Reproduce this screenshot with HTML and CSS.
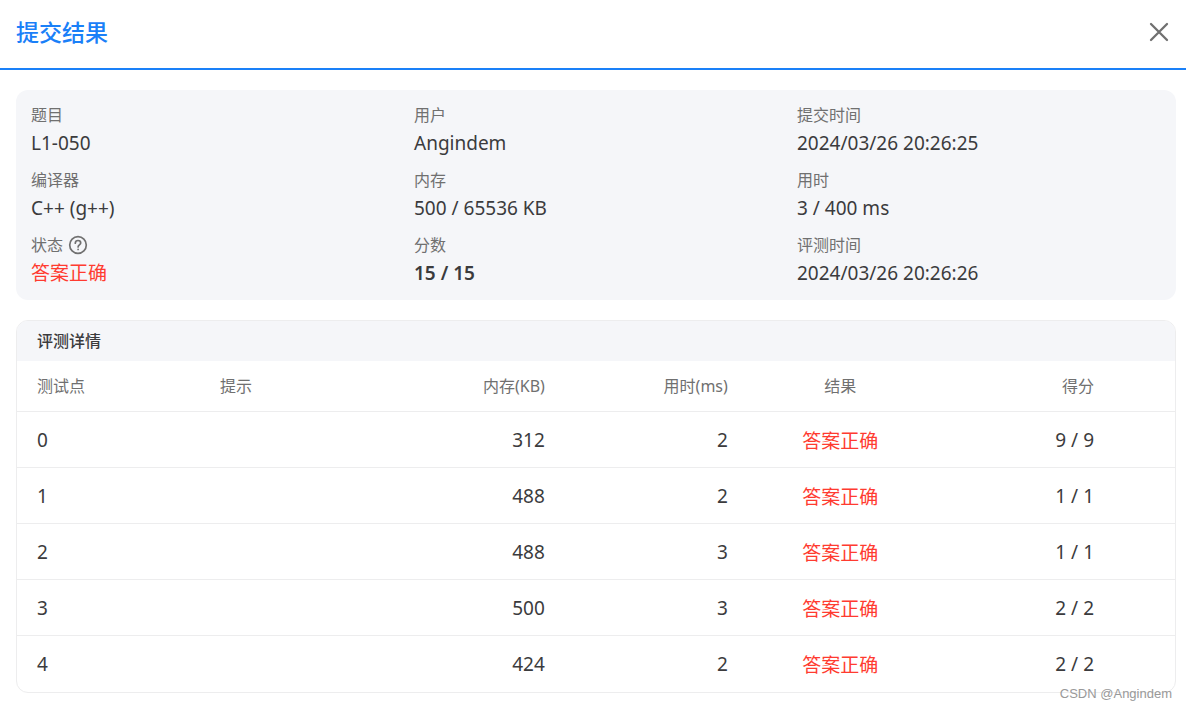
FILE: index.html
```html
<!DOCTYPE html>
<html lang="zh-CN">
<head>
<meta charset="utf-8">
<title>提交结果</title>
<link rel="stylesheet" href="styles.css">
</head>
<body>
<main class="dialog">
  <header class="dialog-header">
    <h1 class="dialog-title">提交结果</h1>
    <button class="close" type="button" aria-label="关闭">
      <svg class="close-icon" viewBox="0 0 20 20" aria-hidden="true"><path d="M2 2 18 18M18 2 2 18"/></svg>
    </button>
  </header>
  <div class="dialog-body">
    <dl class="summary">
      <div class="item"><dt class="label">题目</dt><dd class="value">L1-050</dd></div>
      <div class="item"><dt class="label">用户</dt><dd class="value">Angindem</dd></div>
      <div class="item"><dt class="label">提交时间</dt><dd class="value">2024/03/26 20:26:25</dd></div>
      <div class="item"><dt class="label">编译器</dt><dd class="value">C++ (g++)</dd></div>
      <div class="item"><dt class="label">内存</dt><dd class="value">500 / 65536 KB</dd></div>
      <div class="item"><dt class="label">用时</dt><dd class="value">3 / 400 ms</dd></div>
      <div class="item">
        <dt class="label">状态
          <button class="help" type="button" aria-label="状态说明">
            <svg class="help-icon" viewBox="0 0 20 20" aria-hidden="true"><circle cx="10" cy="10" r="8.3"/><path d="M7.3 8.2C7.3 6.5 8.4 5.5 10 5.5s2.7 1 2.7 2.4c0 1.9-2.6 2-2.6 4"/><path d="M10.1 14.3v.2"/></svg>
          </button>
        </dt>
        <dd class="value accepted">答案正确</dd>
      </div>
      <div class="item"><dt class="label">分数</dt><dd class="value score">15 / 15</dd></div>
      <div class="item"><dt class="label">评测时间</dt><dd class="value">2024/03/26 20:26:26</dd></div>
    </dl>
    <section class="details">
      <h2 class="details-title">评测详情</h2>
      <table class="cases">
        <colgroup><col class="col"><col class="col"><col class="col"><col class="col"><col class="col"><col class="col-last"></colgroup>
        <thead>
          <tr><th>测试点</th><th>提示</th><th class="num">内存(KB)</th><th class="num">用时(ms)</th><th class="mid">结果</th><th class="num points">得分</th></tr>
        </thead>
        <tbody>
          <tr><td>0</td><td></td><td class="num">312</td><td class="num">2</td><td class="mid accepted">答案正确</td><td class="num points">9 / 9</td></tr>
          <tr><td>1</td><td></td><td class="num">488</td><td class="num">2</td><td class="mid accepted">答案正确</td><td class="num points">1 / 1</td></tr>
          <tr><td>2</td><td></td><td class="num">488</td><td class="num">3</td><td class="mid accepted">答案正确</td><td class="num points">1 / 1</td></tr>
          <tr><td>3</td><td></td><td class="num">500</td><td class="num">3</td><td class="mid accepted">答案正确</td><td class="num points">2 / 2</td></tr>
          <tr><td>4</td><td></td><td class="num">424</td><td class="num">2</td><td class="mid accepted">答案正确</td><td class="num points">2 / 2</td></tr>
        </tbody>
      </table>
      <span class="watermark">CSDN @Angindem</span>
    </section>
  </div>
</main>
</body>
</html>
```
FILE: styles.css
```css
* {
  box-sizing: border-box;
}

body {
  margin: 0;
  background: #fff;
  color: #3b3b3d;
  font-family: "Noto Sans", "Noto Sans CJK SC", sans-serif;
  font-size: 19px;
}

.dialog-header {
  display: flex;
  align-items: center;
  justify-content: space-between;
  padding: 16px 16px 20px;
  border-bottom: 2px solid #1a80f8;
}

.dialog-title {
  margin: 0;
  color: #1a80f8;
  font-size: 23px;
  font-weight: 500;
  line-height: 32px;
}

.close,
.help {
  display: flex;
  padding: 0;
  border: 0;
  background: none;
  color: #707070;
  cursor: pointer;
}

.close-icon,
.help-icon {
  width: 20px;
  height: 20px;
  fill: none;
  stroke: currentColor;
  stroke-width: 2;
  stroke-linecap: round;
}

.close {
  padding-right: 1px;
}

.close-icon {
  stroke-width: 2.3;
}

.help-icon {
  stroke-width: 1.7;
}

.dialog-body {
  padding: 20px 10px 18px 16px;
}

.summary {
  display: grid;
  grid-template-columns: repeat(3, 1fr);
  gap: 8px 20px;
  margin: 0 0 20px;
  padding: 13px 16px 10px 15px;
  border-radius: 12px;
  background: #f5f6f9;
}

.label {
  display: flex;
  align-items: center;
  gap: 5px;
  color: #707070;
  font-size: 16px;
  line-height: 24px;
}

.value {
  margin: 0;
  line-height: 33px;
}

.accepted {
  color: #ff3b30;
}

.score {
  font-weight: 600;
}

.details {
  position: relative;
  border: 1px solid #ededee;
  border-radius: 12px;
}

.details-title {
  margin: 0;
  padding: 0 20px;
  border-radius: 11px 11px 0 0;
  background: #f5f6f9;
  font-size: 16px;
  font-weight: 500;
  line-height: 40px;
}

.cases {
  width: 100%;
  border-collapse: separate;
  border-spacing: 0;
  table-layout: fixed;
}

.col {
  width: 15.8%;
}

.cases th,
.cases td {
  height: 56px;
  padding: 0 20px;
  border-bottom: 1px solid #ededee;
  text-align: left;
  white-space: nowrap;
}

.cases th {
  height: 51px;
  padding-bottom: 2px;
  color: #707070;
  font-size: 16px;
  font-weight: 400;
}

.cases tbody tr:last-child td {
  border-bottom: 0;
}

.cases .num {
  padding-right: 21px;
  text-align: right;
}

.cases .mid {
  text-align: center;
}

.cases .points {
  padding-right: 81px;
}

.watermark {
  position: absolute;
  right: 3px;
  bottom: -12px;
  color: #999;
  font-family: "Liberation Sans", Arial, sans-serif;
  font-size: 13px;
  line-height: 20px;
}
```
